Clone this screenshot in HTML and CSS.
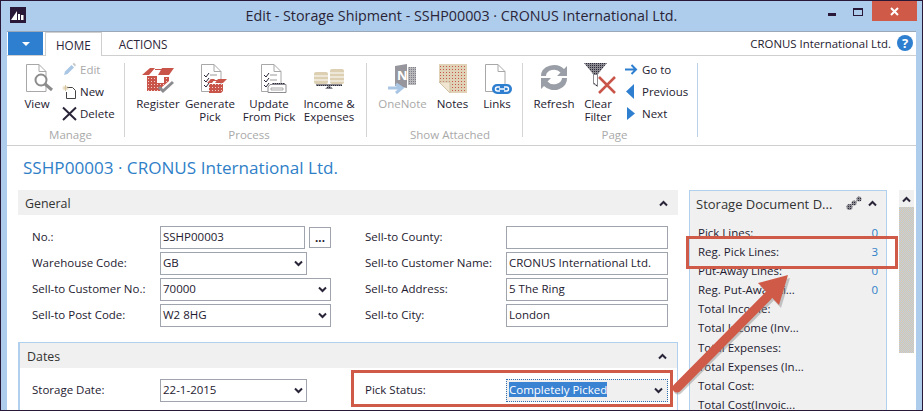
FILE: index.html
```html
<!DOCTYPE html>
<html lang="en">

<head>
    <meta charset="UTF-8">
    <title>Edit - Storage Shipment</title>
    <link rel="stylesheet" href="styles.css">
</head>

<body>
    <svg class="defs" width="0" height="0">
        <defs>
            <pattern id="dotRed" width="3" height="3" patternUnits="userSpaceOnUse">
                <rect width="3" height="3" fill="#c9554a" />
                <rect width="1" height="1" fill="#f0d0c8" />
            </pattern>
            <pattern id="dotNote" width="3" height="3" patternUnits="userSpaceOnUse">
                <rect width="3" height="3" fill="#e0d2b6" />
                <rect width="1" height="1" fill="#c9554a" />
            </pattern>
            <pattern id="dotGrey" width="2" height="2" patternUnits="userSpaceOnUse">
                <rect width="2" height="2" fill="#8a8a90" />
                <rect width="1" height="1" fill="#2a2a3a" />
            </pattern>
            <symbol id="down" viewBox="0 0 9 7">
                <path d="M1 1.500 4.500 5 8 1.500" fill="none" stroke="#2a2438" stroke-width="2" />
            </symbol>
            <symbol id="up" viewBox="0 0 9 7">
                <path d="M1 5.500 4.500 2 8 5.500" fill="none" stroke="#2a2438" stroke-width="2" />
            </symbol>
        </defs>
    </svg>

    <div class="window">
        <div class="titlebar">
            <div class="titlebar-left">
                <svg class="logo" viewBox="0 0 16 16">
                    <rect width="16" height="16" fill="#2a1838" />
                    <path d="M1 13 7 4V13ZM8 7H10V13H8ZM11 8H13.500V13H11Z" fill="#fff" />
                </svg>
            </div>
            <div class="title">Edit - Storage Shipment - SSHP00003 · CRONUS International Ltd.</div>
            <div class="controls">
                <svg class="ctl-min" viewBox="0 0 8 3"><rect width="8" height="3" fill="#2a1838" /></svg>
                <span class="ctl-max"></span>
                <span class="ctl-close">
                    <svg viewBox="0 0 9 9" width="9" height="9">
                        <path d="M1 1 8 8M8 1 1 8" stroke="#fff" stroke-width="2" />
                    </svg>
                </span>
            </div>
        </div>

        <div class="client">
            <div class="tabs">
                <div class="menu-btn"><span class="menu-arrow"></span></div>
                <div class="tab tab-on">HOME</div>
                <div class="tab">ACTIONS</div>
                <div class="company">CRONUS International Ltd.</div>
                <div class="help">?</div>
            </div>

            <div class="ribbon">
                <div class="group g-manage">
                    <div class="group-body">
                        <div class="rb w40">
                            <svg class="rb-icon" viewBox="0 0 32 32">
                                <path d="M5.500 1.500H18L25 8.500V28.500H5.500Z" fill="#fff" stroke="#a8a8a8" />
                                <path d="M18 1.500V8.500H25" fill="none" stroke="#a8a8a8" />
                                <circle cx="20" cy="17" r="5.500" fill="#fff" stroke="#8c8c8c" stroke-width="2" />
                                <path d="M24 21 31 27" stroke="#8c8c8c" stroke-width="3" />
                            </svg>
                            <span class="rb-label">View</span>
                        </div>
                        <div class="small-col">
                            <div class="small off">
                                <svg viewBox="0 0 15 15">
                                    <path d="M2 13 3 9.500 9.500 3 12 5.500 5.500 12Z" fill="#a9c6e4" />
                                    <path d="M10.500 2 12 .8 14 3 13 4.500Z" fill="#c8c8c8" />
                                </svg>
                                Edit
                            </div>
                            <div class="small">
                                <svg viewBox="0 0 15 15">
                                    <path d="M5 3.500H10.500L13.500 6.500V14.500H4.500V8" fill="#fff" stroke="#444" />
                                    <path d="M3.500 1V7M.5 4H6.500M1.500 2 5.500 6M5.500 2 1.500 6" stroke="#dcc9a4" />
                                </svg>
                                New
                            </div>
                            <div class="small">
                                <svg viewBox="0 0 15 15">
                                    <path d="M1 1.500 14 14M14 1.500 1 14" stroke="#2a2438" stroke-width="2" />
                                </svg>
                                Delete
                            </div>
                        </div>
                    </div>
                    <div class="caption">Manage</div>
                </div>

                <div class="group g-process">
                    <div class="group-body">
                        <div class="rb w52">
                            <svg class="rb-icon" viewBox="0 0 32 32">
                                <path d="M0 12 8 5H13L7 12ZM20 5H32L27 12H16ZM13 6H20V7H13Z" fill="#c9554a" />
                                <path d="M5 13H15V20H22V14H27V18L20 24V28H5Z" fill="url(#dotRed)" />
                                <path d="M17 24 21 28 31 19" fill="none" stroke="#8c8c90" stroke-width="3" />
                            </svg>
                            <span class="rb-label">Register</span>
                        </div>
                        <div class="rb w52">
                            <svg class="rb-icon" viewBox="0 0 32 32">
                                <path d="M7.500 1.500H20L27 8.500V28.500H7.500Z" fill="#fff" stroke="#a8a8a8" />
                                <path d="M20 1.500V8.500H27" fill="none" stroke="#a8a8a8" />
                                <path d="M10 12 12 14 15 10M10 17 12 19 15 15M10 22 12 24 15 20" fill="none" stroke="#2a2438" />
                                <path d="M16 12H23M16 17H20" stroke="#999" />
                                <path d="M13 20 17 16H21L18 20ZM24 16H33L29 20H21ZM19 17H25V18H19Z" fill="#c9554a" />
                                <path d="M15 21H29V28L27 30H15Z" fill="url(#dotRed)" />
                            </svg>
                            <span class="rb-label">Generate<br>Pick</span>
                        </div>
                        <div class="rb w66">
                            <svg class="rb-icon" viewBox="0 0 32 32">
                                <path d="M8.500 1.500H21L28 8.500V28.500H8.500Z" fill="#fff" stroke="#a8a8a8" />
                                <path d="M21 1.500V8.500H28" fill="none" stroke="#a8a8a8" />
                                <path d="M11 12 13 14 16 10M11 17 13 19 16 15M11 22 13 24 16 20" fill="none" stroke="#2a2438" />
                                <path d="M17 12H24M17 17H24" stroke="#999" />
                                <path d="M17 21.500H33V29.500H15V24Z" fill="#fff" stroke="#8c8c90" />
                                <path d="M19 20H32V22H19Z" fill="url(#dotGrey)" />
                                <path d="M18 25H30V27H18Z" fill="none" stroke="#a8a8a8" />
                            </svg>
                            <span class="rb-label">Update<br>From Pick</span>
                        </div>
                        <div class="rb w54">
                            <svg class="rb-icon" viewBox="0 0 32 32">
                                <rect x="1" y="9" width="14" height="12" rx="2" fill="#dccfb2" />
                                <rect x="17" y="6" width="14" height="15" rx="2" fill="#dccfb2" />
                                <path d="M1 13H15M1 17H15M17 10H31M17 14H31M17 18H31" stroke="#fff" />
                                <path d="M3 21H29V23H3Z" fill="url(#dotGrey)" />
                                <path d="M16 22 12 26H20Z" fill="url(#dotGrey)" />
                            </svg>
                            <span class="rb-label">Income &amp;<br>Expenses</span>
                        </div>
                    </div>
                    <div class="caption">Process</div>
                </div>

                <div class="group g-attached">
                    <div class="group-body">
                        <div class="rb w49 off">
                            <svg class="rb-icon" viewBox="0 0 32 32">
                                <path d="M8 3 20 1V25L8 23Z" fill="#96969c" />
                                <path d="M21 4H29V22H21Z" fill="url(#dotGrey)" opacity=".6" />
                                <text x="10" y="17" class="onenote-n">N</text>
                                <path d="M1 25H13M9 21 15 25 9 30" fill="none" stroke="#a9c6e4" stroke-width="3" />
                            </svg>
                            <span class="rb-label">OneNote</span>
                        </div>
                        <div class="rb w51">
                            <svg class="rb-icon" viewBox="0 0 32 32">
                                <path d="M2 1H30V30H13L2 19Z" fill="url(#dotNote)" />
                                <path d="M2 19H13V30Z" fill="#f0e6d2" stroke="#d0c2a4" />
                            </svg>
                            <span class="rb-label">Notes</span>
                        </div>
                        <div class="rb w38">
                            <svg class="rb-icon" viewBox="0 0 32 32">
                                <path d="M4.500 1.500H17L24 8.500V28.500H4.500Z" fill="#fff" stroke="#a8a8a8" />
                                <path d="M17 1.500V8.500H24" fill="none" stroke="#a8a8a8" />
                                <rect x="11" y="21" width="20" height="10" rx="5" fill="#2f7fd0" />
                                <path d="M19 24H16.500A2 2 0 0 0 16.500 28H19M23 24H25.500A2 2 0 0 1 25.500 28H23M18 26H24" fill="none" stroke="#fff" stroke-width="1.500" />
                            </svg>
                            <span class="rb-label">Links</span>
                        </div>
                    </div>
                    <div class="caption">Show Attached</div>
                </div>

                <div class="group g-page">
                    <div class="group-body">
                        <div class="rb w44">
                            <svg class="rb-icon" viewBox="0 0 32 32">
                                <path d="M3 13A13 11 0 0 1 26 6L29 3V13H19L22.500 9.500A8 6.500 0 0 0 8 13Z" fill="#9a9ea6" />
                                <path d="M29 15A13 11 0 0 1 6 23L3 26V15H13L9.500 18.500A8 6.500 0 0 0 24 15Z" fill="#9a9ea6" />
                            </svg>
                            <span class="rb-label">Refresh</span>
                        </div>
                        <div class="rb w44">
                            <svg class="rb-icon" viewBox="0 0 32 32">
                                <path d="M2 0H25L16 11V24L11 21V11Z" fill="url(#dotGrey)" />
                                <path d="M12 12H15V22L12 20Z" fill="#fff" />
                                <path d="M17 14 33 30M33 14 17 30" stroke="#c9554a" stroke-width="2.500" />
                            </svg>
                            <span class="rb-label">Clear<br>Filter</span>
                        </div>
                        <div class="small-col nav-col">
                            <div class="small">
                                <svg viewBox="0 0 15 15">
                                    <path d="M1 7.500H12M7.500 3 12 7.500 7.500 12" fill="none" stroke="#2f7fd0" stroke-width="2" />
                                </svg>
                                Go to
                            </div>
                            <div class="small">
                                <svg viewBox="0 0 15 15"><path d="M10 0V15L2 7.500Z" fill="#2f7fd0" /></svg>
                                Previous
                            </div>
                            <div class="small">
                                <svg viewBox="0 0 15 15"><path d="M3 1V14L11 7.500Z" fill="#2f7fd0" /></svg>
                                Next
                            </div>
                        </div>
                    </div>
                    <div class="caption">Page</div>
                </div>
            </div>

            <h1 class="page-title">SSHP00003 · CRONUS International Ltd.</h1>

            <div class="content">
                <div class="sections">
                    <section>
                        <div class="section-head">General <svg class="chev"><use href="#up" /></svg></div>
                        <div class="fields">
                            <div class="col">
                                <div class="field">
                                    <label>No.:</label>
                                    <div class="input w-no">SSHP00003</div>
                                    <div class="dots">...</div>
                                </div>
                                <div class="field">
                                    <label>Warehouse Code:</label>
                                    <div class="input w-mid">GB<svg class="chev"><use href="#down" /></svg></div>
                                </div>
                                <div class="field">
                                    <label>Sell-to Customer No.:</label>
                                    <div class="input w-full">70000<svg class="chev"><use href="#down" /></svg></div>
                                </div>
                                <div class="field">
                                    <label>Sell-to Post Code:</label>
                                    <div class="input w-full">W2 8HG<svg class="chev"><use href="#down" /></svg></div>
                                </div>
                            </div>
                            <div class="col col-right">
                                <div class="field">
                                    <label>Sell-to County:</label>
                                    <div class="input w-right"></div>
                                </div>
                                <div class="field">
                                    <label>Sell-to Customer Name:</label>
                                    <div class="input w-right">CRONUS International Ltd.</div>
                                </div>
                                <div class="field">
                                    <label>Sell-to Address:</label>
                                    <div class="input w-right">5 The Ring</div>
                                </div>
                                <div class="field">
                                    <label>Sell-to City:</label>
                                    <div class="input w-right">London</div>
                                </div>
                            </div>
                        </div>
                    </section>

                    <section class="dates">
                        <div class="section-head">Dates <svg class="chev"><use href="#up" /></svg></div>
                        <div class="fields">
                            <div class="col">
                                <div class="field">
                                    <label>Storage Date:</label>
                                    <div class="input w-mid">22-1-2015<svg class="chev"><use href="#down" /></svg></div>
                                </div>
                            </div>
                            <div class="col col-right">
                                <div class="field">
                                    <label>Pick Status:</label>
                                    <div class="input w-right focused">
                                        <span class="selected">Completely Picked</span>
                                        <svg class="chev"><use href="#down" /></svg>
                                    </div>
                                </div>
                            </div>
                        </div>
                    </section>
                </div>

                <aside class="factbox">
                    <div class="fact-head">
                        <span class="fact-title">Storage Document D...</span>
                        <svg class="fact-icon" viewBox="0 0 16 15">
                            <path d="M3 11 8 7 13 3" stroke="#777" />
                            <circle cx="3.500" cy="11" r="3" fill="url(#dotGrey)" />
                            <circle cx="8" cy="7" r="2.500" fill="url(#dotGrey)" />
                            <circle cx="13" cy="3" r="2.500" fill="url(#dotGrey)" />
                        </svg>
                        <svg class="chev"><use href="#up" /></svg>
                    </div>
                    <div class="fact-rows">
                        <div class="fact-row">Pick Lines:<span class="val">0</span></div>
                        <div class="fact-row">Reg. Pick Lines:<span class="val">3</span></div>
                        <div class="fact-row">Put-Away Lines:<span class="val">0</span></div>
                        <div class="fact-row">Reg. Put-Away Li...<span class="val">0</span></div>
                        <div class="fact-row">Total Income:</div>
                        <div class="fact-row">Total Income (Inv...</div>
                        <div class="fact-row">Total Expenses:</div>
                        <div class="fact-row">Total Expenses (In...</div>
                        <div class="fact-row">Total Cost:</div>
                        <div class="fact-row">Total Cost(Invoic...</div>
                    </div>
                </aside>

                <div class="scrollbar">
                    <div class="scroll-up"><svg class="chev"><use href="#up" /></svg></div>
                    <div class="thumb"></div>
                </div>
            </div>
        </div>

        <!-- red markers drawn on top of the screenshot -->
        <div class="mark mark-status"></div>
        <div class="mark mark-lines"></div>
        <svg class="arrow" viewBox="0 0 923 411" width="923" height="411">
            <g class="arrow-shadow">
                <path d="M678 390 770 298" stroke-width="9" stroke-linecap="round" />
                <path d="M790 278 760 286 781 308Z" />
            </g>
            <g class="arrow-red">
                <path d="M677 388 768 296" stroke-width="9" stroke-linecap="round" />
                <path d="M788 275 758 283 779 305Z" />
            </g>
        </svg>
    </div>
</body>

</html>
```

FILE: styles.css
```css
* {
    box-sizing: border-box;
}

body {
    margin: 0;
    background: #aecdec;
    overflow: hidden;
}

.defs {
    position: absolute;
}

.window {
    position: relative;
    width: 923px;
    height: 411px;
    overflow: hidden;
    display: flex;
    flex-direction: column;
    background: #aecdec;
    border: 1px solid #2a1838;
    font-family: "Open Sans", "Noto Sans", sans-serif;
    font-size: 11.5px;
    color: #1e1a30;
}

/* title bar */
.titlebar {
    display: grid;
    grid-template-columns: 1fr auto 1fr;
    height: 30px;
    flex: none;
}

.titlebar-left {
    padding: 6px 0 0 9px;
}

.logo {
    display: block;
    width: 16px;
    height: 16px;
}

.title {
    font-size: 14.300px;
    line-height: 29px;
    color: #2a2438;
}

.controls {
    display: flex;
    justify-content: flex-end;
    align-items: flex-start;
    padding-right: 5px;
}

.ctl-min {
    width: 8px;
    height: 3px;
    margin: 12px 17px 0 0;
}

.ctl-max {
    width: 10px;
    height: 8px;
    margin: 7px 9px 0 0;
    border: 1px solid #2a1838;
    border-top-width: 2px;
}

.ctl-close {
    display: flex;
    align-items: center;
    justify-content: center;
    width: 45px;
    height: 20px;
    background: #d05a48;
}

/* white client area */
.client {
    flex: 1;
    margin: 0 6px;
    background: #fff;
    border-top: 1px solid #9aa8b8;
    min-height: 0;
}

.tabs {
    display: flex;
    align-items: flex-end;
    height: 24px;
    border-bottom: 1px solid #cfcfcf;
}

.menu-btn {
    display: flex;
    align-items: center;
    justify-content: center;
    width: 35px;
    height: 23px;
    margin: 0 2px 0 1px;
    align-self: flex-start;
    background: #2f7fd0;
}

.menu-arrow {
    border: 4px solid transparent;
    border-top: 4px solid #fff;
    border-bottom-width: 0;
}

.tab {
    height: 23px;
    padding: 0 17px;
    line-height: 24px;
    font-size: 11.700px;
    color: #2a2438;
}

.tab-on {
    height: 24px;
    margin-bottom: -1px;
    padding: 0 10px;
    background: #fff;
    border: 1px solid #cfcfcf;
    border-bottom: 0;
}

.company {
    margin-left: auto;
    height: 23px;
    line-height: 24px;
    font-size: 11.400px;
}

.help {
    width: 16px;
    height: 16px;
    margin: 0 3px 4px 6px;
    border-radius: 50%;
    background: #2f7fd0;
    color: #fff;
    font-weight: 700;
    font-size: 13px;
    line-height: 16px;
    text-align: center;
}

/* ribbon */
.ribbon {
    display: flex;
    height: 90px;
    padding: 7px 0;
    border-bottom: 1px solid #cfcfcf;
}

.group {
    display: flex;
    flex-direction: column;
    height: 74px;
    border-right: 1px solid #d4d4d4;
}

.g-manage {
    width: 118px;
    padding-left: 10px;
}

.g-process {
    width: 242px;
    padding-left: 7px;
}

.g-attached {
    width: 156px;
    padding-left: 11px;
}

.g-page {
    width: 175px;
    padding-left: 9px;
    border-right-color: #b9d2ea;
}

.group-body {
    display: flex;
    height: 65px;
}

.caption {
    height: 9px;
    line-height: 14px;
    text-align: center;
    color: #a9a9a9;
}

.rb {
    display: flex;
    flex-direction: column;
    align-items: center;
    flex: none;
}

.rb-icon {
    width: 32px;
    height: 32px;
    flex: none;
    overflow: visible;
}

.rb-label {
    margin-top: 2px;
    line-height: 13px;
    text-align: center;
    white-space: nowrap;
}

.w38 { width: 38px; }
.w40 { width: 40px; }
.w44 { width: 44px; }
.w49 { width: 49px; }
.w51 { width: 51px; }
.w52 { width: 52px; }
.w54 { width: 54px; }
.w66 { width: 66px; }

.off {
    color: #a9a9a9;
}

.onenote-n {
    font-size: 13px;
    font-weight: 700;
    fill: #fff;
}

.small-col {
    margin: -5px 0 0 5px;
}

.nav-col {
    margin-left: 4px;
}

.small {
    display: flex;
    align-items: center;
    gap: 3px;
    height: 22px;
    white-space: nowrap;
}

.small svg {
    width: 15px;
    height: 15px;
    flex: none;
}

.page-title {
    margin: 0;
    padding: 10px 0 0 16px;
    height: 44px;
    font-size: 17.100px;
    font-weight: 400;
    line-height: 23px;
    color: #2f7fc8;
}

/* form */
.content {
    display: flex;
    align-items: flex-start;
    padding-left: 11px;
}

.sections {
    width: 660px;
    flex: none;
}

.section-head {
    display: flex;
    align-items: center;
    justify-content: space-between;
    height: 25px;
    padding: 1px 10px 0 7px;
    background: #f0f0f0;
    font-size: 12.400px;
    color: #333;
}

.chev {
    width: 9px;
    height: 7px;
    flex: none;
}

.fields {
    display: flex;
    padding: 11px 0 0 14px;
}

.col {
    display: flex;
    flex-direction: column;
    gap: 3px;
    width: 333px;
}

.col-right {
    width: 303px;
}

.col-right label {
    width: 141px;
}

.field {
    display: flex;
    align-items: center;
    height: 23px;
}

label {
    width: 128px;
    flex: none;
    padding-bottom: 2px;
    white-space: nowrap;
}

.input {
    display: flex;
    align-items: center;
    justify-content: space-between;
    height: 23px;
    padding: 0 3px 2px 2px;
    border: 1px solid #a0a4ac;
    background: #fff;
    white-space: nowrap;
}

.input .chev {
    margin-top: 2px;
}

.w-no { width: 145px; }
.w-mid { width: 147px; }
.w-full { width: 171px; }
.w-right { width: 162px; }

.dots {
    width: 22px;
    height: 21px;
    margin-left: 4px;
    border: 1px solid #a0a4ac;
    text-align: center;
    font-weight: 700;
    line-height: 19px;
}

.focused {
    padding-right: 4px;
    border: 1px dotted #2f6fb0;
    background: #f0f0f0;
}

.selected {
    background: #3a82d2;
    color: #fff;
}

.dates {
    height: 70px;
    margin-top: 15px;
    border: 2px solid #b0d0ee;
    border-top-width: 1px;
    border-right-width: 1px;
}

.dates .fields {
    padding-left: 12px;
}

.factbox {
    width: 198px;
    height: 225px;
    margin-left: 11px;
    flex: none;
    background: #f0f0f0;
    border: 1px solid #b0d0ee;
}

.fact-head {
    display: flex;
    align-items: center;
    height: 25px;
    padding: 0 9px 0 6px;
}

.fact-title {
    flex: 1;
    font-size: 13px;
    color: #333;
    white-space: nowrap;
}

.fact-icon {
    width: 16px;
    height: 15px;
    margin-right: 6px;
}

.fact-rows {
    padding: 7px 8px 0;
}

.fact-row {
    display: flex;
    justify-content: space-between;
    height: 19.100px;
    line-height: 19px;
    white-space: nowrap;
}

.val {
    color: #2f7fc8;
}

.scrollbar {
    width: 15px;
    flex: none;
    margin-left: 12px;
}

.scroll-up {
    display: flex;
    align-items: center;
    justify-content: center;
    height: 17px;
    padding-top: 1px;
    background: #f0f0f0;
}

.thumb {
    height: 146px;
    background: repeating-conic-gradient(#dcc9a8 0 25%, #bccde4 0 50%) 0 0 / 2px 2px;
}

/* overlays */
.mark {
    position: absolute;
    border: 3px solid #d05a48;
}

.mark-status {
    left: 350px;
    top: 369px;
    width: 322px;
    height: 37px;
}

.mark-lines {
    left: 685px;
    top: 235px;
    width: 212px;
    height: 33px;
}

.arrow {
    position: absolute;
    left: -1px;
    top: -1px;
}

.arrow-shadow {
    fill: #8a8a8a;
    stroke: #8a8a8a;
    opacity: 0.45;
}

.arrow-shadow path,
.arrow-red path {
    stroke-width: 9;
}

.arrow-shadow path:last-child,
.arrow-red path:last-child {
    stroke-width: 0;
}

.arrow-red {
    fill: #d05a48;
    stroke: #d05a48;
}
```
